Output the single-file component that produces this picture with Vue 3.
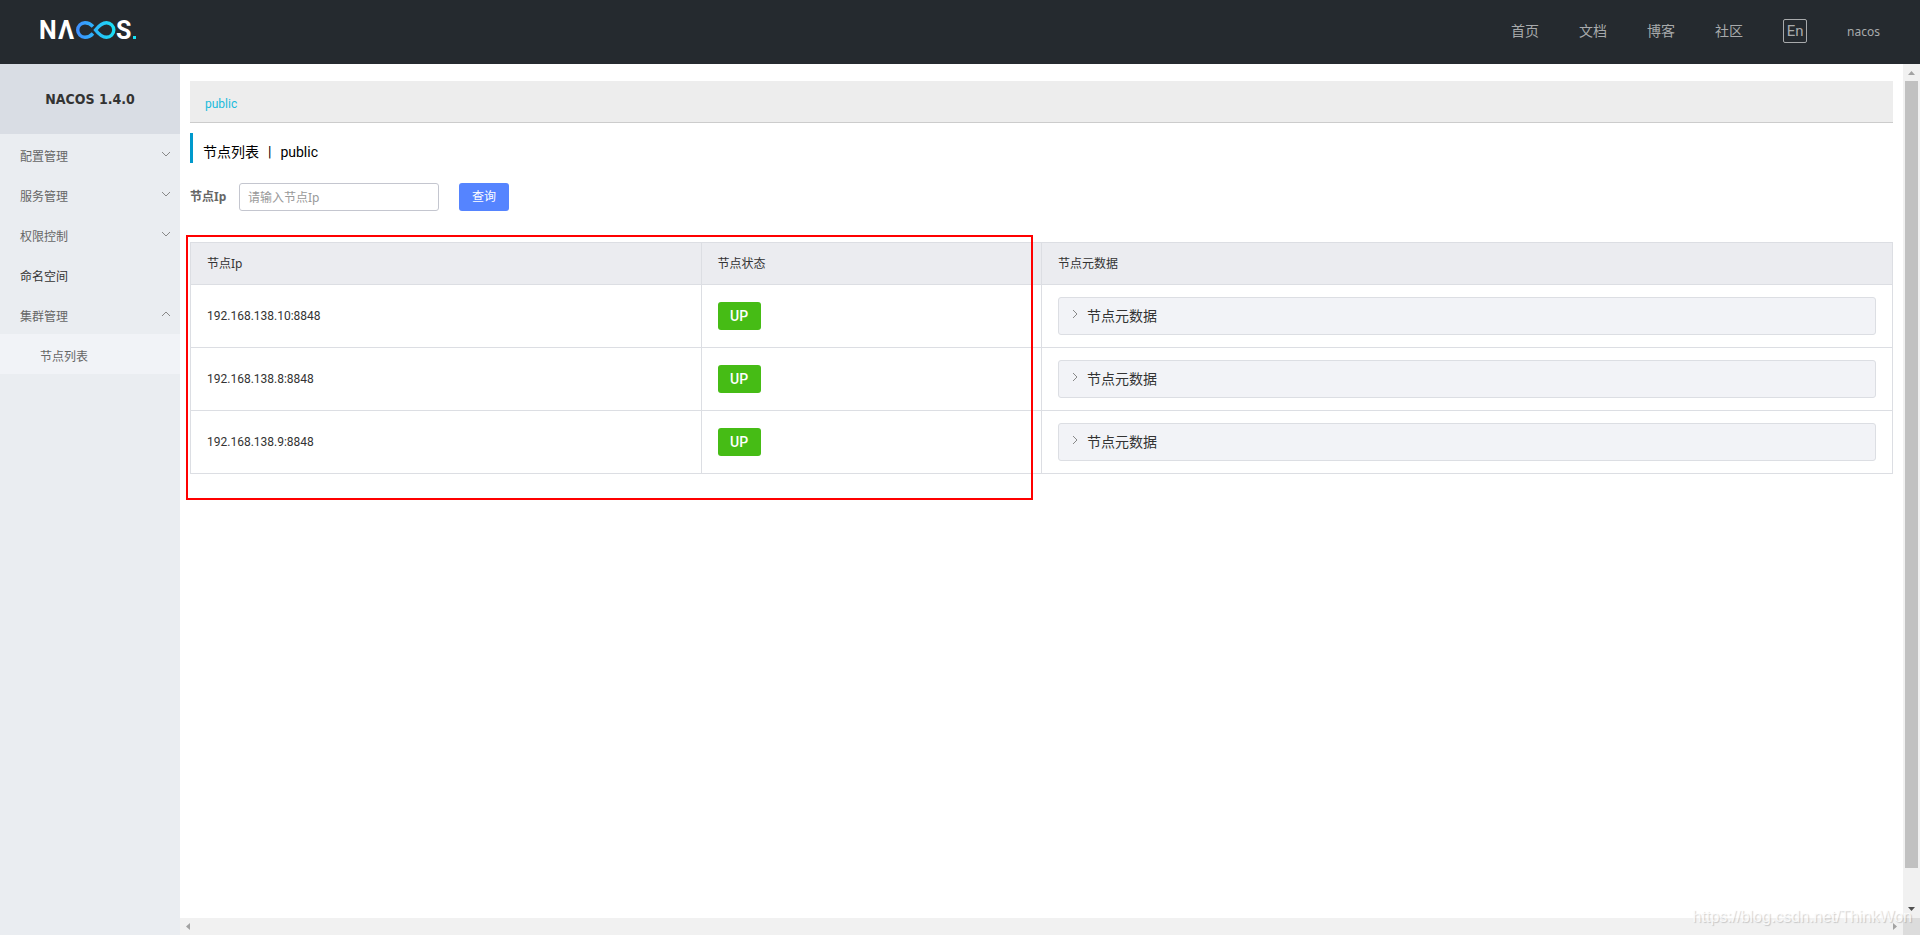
<script setup>
import { ref } from 'vue'

const links = ['首页', '文档', '博客', '社区']
const menu = [
  { label: '配置管理', group: true },
  { label: '服务管理', group: true },
  { label: '权限控制', group: true },
  { label: '命名空间' },
  { label: '集群管理', group: true, open: true, children: ['节点列表'] }
]
const nodes = ['192.168.138.10:8848', '192.168.138.8:8848', '192.168.138.9:8848']
const ip = ref('')
</script>

<template>
  <div class="page">
    <header class="top">
      <a href="#" class="logo" aria-label="NACOS">
        <svg width="100" height="40" viewBox="0 -8 100 40">
          <defs>
            <linearGradient id="loop" gradientUnits="userSpaceOnUse" x1="36" y1="0" x2="76" y2="0">
              <stop offset="0" stop-color="#3f8cff" />
              <stop offset="1" stop-color="#17e3f5" />
            </linearGradient>
          </defs>
          <g class="mark" fill="#fff">
            <text x="-1" y="21">N</text>
            <text x="18" y="21">Λ</text>
            <text x="76" y="21">S</text>
          </g>
          <g fill="none" stroke="url(#loop)" stroke-width="3.4">
            <path d="M53 8.5 C50.500 5.800 48 4.700 45 4.700 A7.300 7.300 0 0 0 45 19.300 C48 19.300 50.500 18.200 53 15.500" />
            <path d="M55.500 12 C59 7.500 62 4.700 66.500 4.700 A7.300 7.300 0 0 1 66.500 19.300 C62 19.300 59 16.500 55.500 12 Z" />
          </g>
          <rect x="93" y="18" width="3" height="3" fill="#17e3f5" />
        </svg>
      </a>
      <nav class="links">
        <a v-for="l in links" :key="l" href="#">{{ l }}</a>
        <button class="lang" type="button">En</button>
        <a href="#" class="user">nacos</a>
      </nav>
    </header>

    <div class="body">
      <aside class="side">
        <h1>NACOS 1.4.0</h1>
        <ul>
          <li v-for="m in menu" :key="m.label">
            <a href="#" class="item" :class="{ leaf: !m.group }">
              <span>{{ m.label }}</span>
              <svg v-if="m.group" width="10" height="10" viewBox="0 0 10 10">
                <path :d="m.open ? 'M1 7 L5 3 L9 7' : 'M1 3 L5 7 L9 3'" />
              </svg>
            </a>
            <a v-for="c in m.children" :key="c" href="#" class="item sub"><span>{{ c }}</span></a>
          </li>
        </ul>
      </aside>

      <main class="content">
        <div class="space"><a href="#">public</a></div>
        <h2><span>节点列表</span><span>|</span><span>public</span></h2>
        <form class="search" @submit.prevent>
          <label for="ip">节点Ip</label>
          <input id="ip" v-model="ip" type="text" placeholder="请输入节点Ip" />
          <button type="submit">查询</button>
        </form>
        <div class="tablebox">
          <table>
            <thead>
              <tr>
                <th class="c1">节点Ip</th>
                <th class="c2">节点状态</th>
                <th>节点元数据</th>
              </tr>
            </thead>
            <tbody>
              <tr v-for="n in nodes" :key="n">
                <td>{{ n }}</td>
                <td><button class="up" type="button">UP</button></td>
                <td>
                  <button class="meta" type="button">
                    <svg width="10" height="10" viewBox="0 0 10 10"><path d="M3 1 L7 5 L3 9" /></svg>
                    <span>节点元数据</span>
                  </button>
                </td>
              </tr>
            </tbody>
          </table>
          <div class="highlight"></div>
        </div>
      </main>

      <div class="vbar">
        <svg width="17" height="17" viewBox="0 0 17 17"><path fill="#a3a3a3" d="M5 11 L8.500 7 L12 11 Z" /></svg>
        <div class="track"><div class="thumb"></div></div>
        <svg width="17" height="17" viewBox="0 0 17 17"><path fill="#505050" d="M5 6 L12 6 L8.500 10 Z" /></svg>
      </div>
      <div class="hbar">
        <svg width="17" height="17" viewBox="0 0 17 17"><path fill="#a3a3a3" d="M10 5 L10 12 L6 8.500 Z" /></svg>
        <svg width="17" height="17" viewBox="0 0 17 17"><path fill="#a3a3a3" d="M7 5 L7 12 L11 8.500 Z" /></svg>
      </div>
      <div class="corner"></div>
    </div>
    <div class="watermark">https://blog.csdn.net/ThinkWon</div>
  </div>
</template>

<style>
body {
  margin: 0;
}
</style>

<style scoped>
.page {
  position: relative;
  display: flex;
  flex-direction: column;
  min-height: 100vh;
  overflow: hidden;
  font-family: Roboto, "Noto Sans CJK SC", sans-serif;
  font-size: 12px;
  line-height: 20px;
  color: #333;
  background: #fff;
}
.page *,
.page {
  box-sizing: border-box;
}
a {
  color: inherit;
  text-decoration: none;
}
button,
input {
  font: inherit;
  margin: 0;
}
svg {
  display: block;
}
.top {
  display: flex;
  align-items: center;
  justify-content: space-between;
  height: 64px;
  padding: 0 40px;
  background: #252a2f;
  color: #a8aaac;
}
.logo {
  padding-bottom: 4px;
}
.mark {
  font-family: Roboto, sans-serif;
  font-size: 25px;
  font-weight: 700;
}
.links {
  display: flex;
  align-items: center;
  gap: 40px;
  padding-bottom: 2px;
  font-size: 14px;
}
.lang {
  width: 24px;
  height: 24px;
  padding: 0;
  border: 1px solid #a8aaac;
  border-radius: 2px;
  background: none;
  color: inherit;
  font-size: 15px;
  line-height: 20px;
}
.user {
  padding-top: 2px;
  font-family: "Noto Sans", sans-serif;
  font-size: 12px;
}
.body {
  flex: 1;
  display: grid;
  grid-template-columns: 180px minmax(0, 1fr) 17px;
  grid-template-rows: 1fr 17px;
}
.side {
  grid-row: 1 / 3;
  background: #eaedf1;
}
.side h1 {
  margin: 0;
  height: 70px;
  background: #d9dde4;
  font: 700 14px/70px "DejaVu Sans Condensed", "DejaVu Sans", sans-serif;
  text-align: center;
}
ul {
  margin: 0;
  padding: 0;
  list-style: none;
}
.item {
  display: flex;
  align-items: center;
  justify-content: space-between;
  height: 40px;
  padding: 0 9px 0 20px;
  color: #666;
}
.item span {
  padding-top: 6px;
}
.item path,
.meta path {
  fill: none;
  stroke: #888;
}
.leaf {
  color: #333;
}
.sub {
  padding-left: 40px;
  background: #f1f3f7;
}
.content {
  padding: 17px 10px;
}
.space {
  height: 42px;
  padding: 13px 15px 0;
  border-bottom: 1px solid #ccc;
  background: #ededed;
  color: #1abbdc;
}
h2 {
  display: flex;
  gap: 9px;
  height: 30px;
  margin: 10px 0 20px;
  padding: 8px 0 0 10px;
  border-left: 3px solid #09c;
  color: #000;
  font-size: 14px;
  font-weight: 400;
  line-height: 22px;
}
.search {
  display: flex;
  align-items: center;
}
.search label,
.search input,
th {
  font-family: "Noto Sans", "Noto Sans CJK SC", sans-serif;
}
.search label {
  width: 49px;
  color: #666;
  font-weight: 700;
}
.search input {
  width: 200px;
  height: 28px;
  padding: 0 8px;
  border: 1px solid #c4c6cf;
  border-radius: 3px;
  color: #333;
  outline: none;
}
.search input::placeholder {
  color: #999;
}
.search button {
  width: 50px;
  height: 28px;
  margin-left: 20px;
  padding: 0;
  border: 0;
  border-radius: 3px;
  background: #5584ff;
  color: #fff;
}
.tablebox {
  position: relative;
  margin-top: 31px;
}
table {
  width: 100%;
  table-layout: fixed;
  border-collapse: separate;
  border-spacing: 0;
  border: solid #dcdee3;
  border-width: 1px 0 0 1px;
}
th,
td {
  padding: 0 16px;
  border: solid #dcdee3;
  border-width: 0 1px 1px 0;
  text-align: left;
  font-weight: 400;
}
th {
  height: 42px;
  background: #ebecf0;
}
td {
  height: 63px;
}
.c1 {
  width: 30%;
}
.c2 {
  width: 20%;
}
.up {
  display: block;
  width: 43px;
  height: 28px;
  padding: 0;
  border: 0;
  border-radius: 3px;
  background: #46bc15;
  color: #fff;
  font-size: 14px;
  font-weight: 500;
}
.meta {
  display: flex;
  align-items: center;
  gap: 7px;
  width: 100%;
  height: 38px;
  padding: 0 11px;
  border: 1px solid #dcdee3;
  border-radius: 3px;
  background: #f2f3f7;
  color: #333;
  font-size: 14px;
}
.meta svg {
  margin-bottom: 4px;
}
.highlight {
  position: absolute;
  top: -7px;
  left: -4px;
  width: calc(50% - 5px);
  height: 265px;
  border: 2px solid #f00;
  pointer-events: none;
}
.vbar {
  display: flex;
  flex-direction: column;
  background: #f1f1f1;
}
.track {
  flex: 1;
  padding: 0 2px;
}
.thumb {
  height: 96%;
  background: #c1c1c1;
}
.hbar {
  display: flex;
  justify-content: space-between;
  background: #f1f1f1;
}
.corner {
  background: #dcdcdc;
}
.watermark {
  position: absolute;
  right: 8px;
  bottom: 8px;
  font: 16px/20px "Liberation Sans", sans-serif;
  color: rgba(255, 255, 255, 0.8);
  text-shadow: 1px 1px 1px rgba(0, 0, 0, 0.18);
  pointer-events: none;
}
</style>
